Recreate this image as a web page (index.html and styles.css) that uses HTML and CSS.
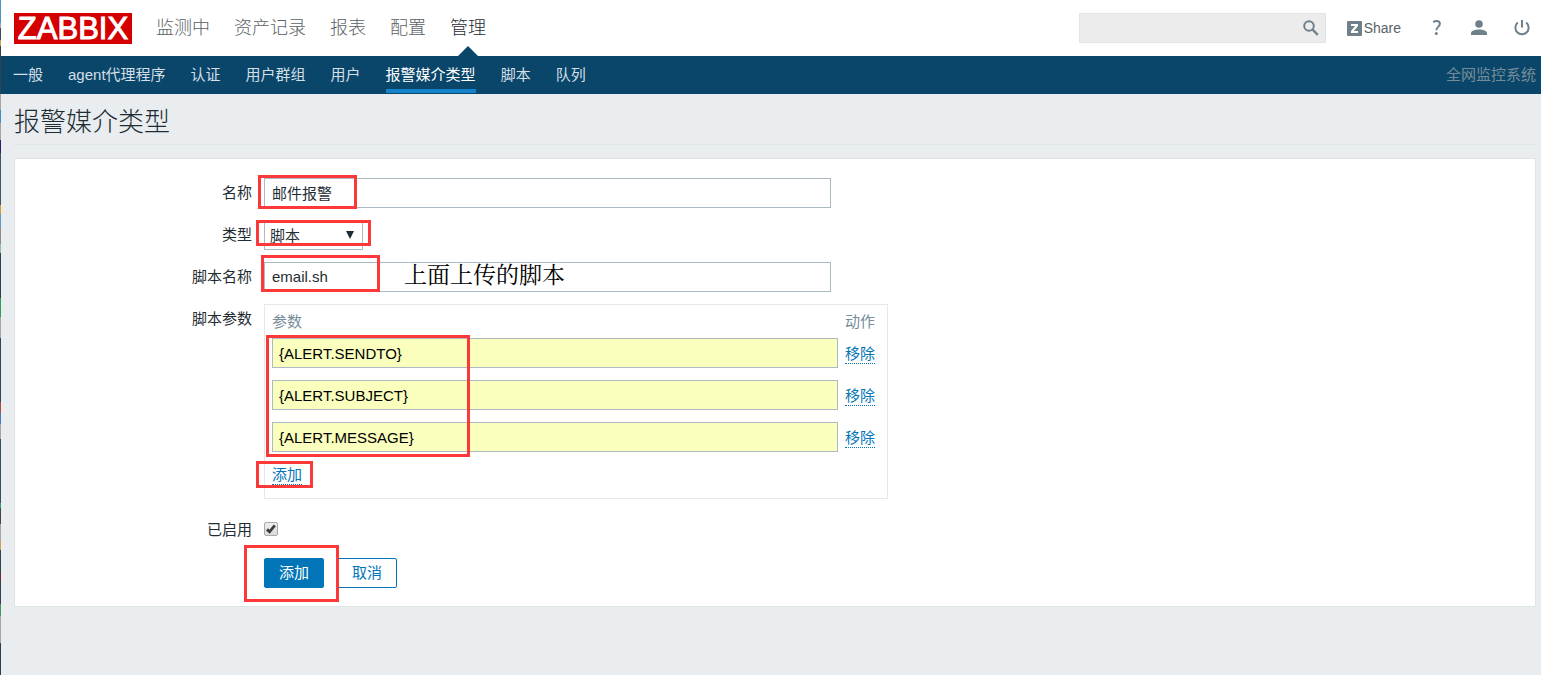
FILE: index.html
```html
<!DOCTYPE html>
<html lang="zh-CN">
<head>
<meta charset="utf-8">
<title>报警媒介类型</title>
<link rel="stylesheet" href="styles.css">
</head>
<body>
<header class="top-bar">
  <a class="logo" href="#">ZABBIX</a>
  <nav class="main-nav">
    <a href="#">监测中</a>
    <a href="#">资产记录</a>
    <a href="#">报表</a>
    <a href="#">配置</a>
    <a class="selected" href="#">管理</a>
  </nav>
  <div class="tools">
    <form class="search">
      <input type="text" aria-label="搜索">
      <button type="button" aria-label="搜索">
        <svg width="16" height="16" viewBox="0 0 16 16" fill="none" stroke="#6f808a"><circle cx="6" cy="6" r="4.8" stroke-width="2"/><path d="M9.5 9.5l5.3 5.3" stroke-width="2.4"/></svg>
      </button>
    </form>
    <a class="share" href="#"><span class="share-mark"><svg width="15" height="15" viewBox="0 0 15 15"><rect width="15" height="15" rx="1" fill="#6f808a"/><path d="M4 3h7v2L6.8 10H11v2H4v-2l4.2-5H4z" fill="#fff"/></svg></span>Share</a>
    <a class="tool help" href="#" aria-label="帮助"><svg width="10" height="16" viewBox="0 0 10 16"><path d="M1.2 2.2C2.2 1.4 3.400 1 4.600 1c2 0 3.300 1 3.300 2.800 0 3-3.600 3.200-3.600 6.400" fill="none" stroke="#6f808a" stroke-width="2"/><circle cx="4.300" cy="13.600" r="1.500" fill="#6f808a"/></svg></a>
    <a class="tool user" href="#" aria-label="用户"><svg width="16" height="16" viewBox="0 0 16 16" fill="#6f808a"><circle cx="8" cy="4" r="3.800"/><path d="M0 15v-2c0-2 4-3.500 8-3.500s8 1.500 8 3.500v2z"/></svg></a>
    <a class="tool power" href="#" aria-label="退出"><svg width="16" height="16" viewBox="0 0 16 16" fill="none" stroke="#6f808a" stroke-width="2"><path d="M8 0v7.500M3.800 2.600a6.600 6.600 0 1 0 8.400 0"/></svg></a>
  </div>
</header>
<div class="sub-bar">
  <nav class="sub-nav">
    <a href="#">一般</a>
    <a href="#">agent代理程序</a>
    <a href="#">认证</a>
    <a href="#">用户群组</a>
    <a href="#">用户</a>
    <a class="selected" href="#">报警媒介类型</a>
    <a href="#">脚本</a>
    <a href="#">队列</a>
  </nav>
  <span class="server-name">全网监控系统</span>
</div>
<main>
  <h1>报警媒介类型</h1>
  <form class="panel">
    <label for="name">名称</label>
    <div class="field"><input class="text" id="name" type="text" value="邮件报警"><span class="mark mark-name"></span></div>

    <label for="type">类型</label>
    <div class="field">
      <select id="type"><option>脚本</option></select>
      <svg class="caret" width="8" height="8" viewBox="0 0 8 8"><path d="M0 0h8L4 8z" fill="#1f2c33"/></svg>
      <span class="mark mark-type"></span>
    </div>

    <label for="script">脚本名称</label>
    <div class="field"><input class="text" id="script" type="text" value="email.sh"><span class="mark mark-script"></span><span class="note">上面上传的脚本</span></div>

    <span class="label">脚本参数</span>
    <div class="field params">
      <table>
        <thead><tr><th>参数</th><th>动作</th></tr></thead>
        <tbody>
          <tr><td><input class="text param" type="text" aria-label="参数 1" value="{ALERT.SENDTO}"></td><td><button class="link" type="button">移除</button></td></tr>
          <tr><td><input class="text param" type="text" aria-label="参数 2" value="{ALERT.SUBJECT}"></td><td><button class="link" type="button">移除</button></td></tr>
          <tr><td><input class="text param" type="text" aria-label="参数 3" value="{ALERT.MESSAGE}"></td><td><button class="link" type="button">移除</button></td></tr>
        </tbody>
      </table>
      <button class="link add" type="button">添加</button>
      <span class="mark mark-params"></span>
      <span class="mark mark-add"></span>
    </div>

    <label class="check-label" for="enabled">已启用</label>
    <div class="field check">
      <input id="enabled" type="checkbox" checked>
      <svg class="tick" width="14" height="14" viewBox="0 0 14 14" fill="none" stroke="#3c3c3c" stroke-width="2.800"><path d="M3 7.400l2.600 2.400L10.800 3.400"/></svg>
    </div>

    <div class="field actions">
      <button class="btn primary" type="button">添加</button>
      <button class="btn" type="button">取消</button>
      <span class="mark mark-submit"></span>
    </div>
  </form>
</main>
</body>
</html>
```
FILE: styles.css
```css
* { box-sizing: border-box; }

html {
  min-height: 100%;
  background:
    linear-gradient(#4a94c8 0 23px, #a5a5a5 23px 28px, #33505f 28px 40px, #c9a052 40px 46px, #33424d 46px 94px, #a5a5a5 94px 110px, #3c8fc0 110px 123px, #a5a5a5 123px 140px, #2a2060 140px 153px, #3f5561 153px 205px, #d99a2b 205px 214px, #5a9cc6 214px 227px, #8a8a8a 227px 244px, #8fbf9f 244px 253px, #2f3f50 253px 298px, #2f9e55 298px 317px, #a5a5a5 317px 338px, #2f4656 338px 402px, #b0483f 402px 413px, #4a78b8 413px 424px, #a5a5a5 424px 439px, #33505f 439px 503px, #2aa07a 503px 508px, #444 508px 524px, #a5a5a5 524px 541px, #c9a052 541px 550px, #33424d 550px 574px, #6d2b2b 574px 582px, #33424d 582px 604px, #3f9a58 604px 616px, #a5a5a5 616px 643px, #2c3c4c 643px)
    0 0 / 1px 100% no-repeat,
    #e9edf0;
}

body {
  margin: 0;
  padding-left: 1px;
  font: 15px/20px "Liberation Sans", "Noto Sans CJK SC", sans-serif;
  color: #1f2c33;
}

a { text-decoration: none; color: inherit; }
input, select, button { font: inherit; color: inherit; margin: 0; }
svg { display: block; }

.top-bar {
  display: flex;
  align-items: center;
  height: 56px;
  padding: 0 11px 0 13px;
  background: #fff;
}

.logo {
  width: 118px;
  height: 31px;
  background: #d40000;
  color: #fff;
  font-size: 31px;
  line-height: 32px;
  text-align: center;
  -webkit-text-stroke: 1px #fff;
}

.main-nav {
  display: flex;
  gap: 24px;
  margin-left: 24px;
  font-size: 18px;
  font-weight: 300;
  line-height: 56px;
  color: #5a6266;
}

.main-nav .selected { position: relative; color: #1f2c33; }

.main-nav .selected::after {
  content: "";
  position: absolute;
  left: 50%;
  bottom: 0;
  margin-left: -10px;
  border: solid transparent;
  border-width: 0 10px 10px;
  border-bottom-color: #0a466a;
}

.tools {
  display: flex;
  align-items: center;
  margin-left: auto;
}

.search {
  display: flex;
  align-items: center;
  width: 247px;
  height: 30px;
  margin-right: 21px;
  padding-right: 6px;
  background: #ececec;
  border: 1px solid #e2e5e7;
}

.search input {
  flex: 1;
  min-width: 0;
  border: 0;
  background: none;
}

.search button { padding: 0; border: 0; background: none; }

.share {
  display: flex;
  align-items: center;
  gap: 2px;
  margin-right: 31px;
  font-size: 14px;
  color: #5a6266;
}

.help { margin-right: 29px; }
.user { margin-right: 27px; }

.sub-bar {
  display: flex;
  justify-content: space-between;
  height: 38px;
  padding: 0 5px 0 12px;
  background: #0a466a;
  line-height: 37px;
  color: #d4dfe6;
}

.sub-nav { display: flex; gap: 25px; }

.sub-nav a { height: 37px; }

.sub-nav .selected {
  color: #fff;
  border-bottom: 4px solid #1583cb;
}

.server-name { color: #768d99; }

main { padding: 0 5px 0 13px; }

h1 {
  margin: 0 0 13px;
  padding: 8px 0 2px;
  border-bottom: 1px solid #dfe4e7;
  font-size: 26px;
  font-weight: 300;
  line-height: 40px;
}

.panel {
  display: grid;
  grid-template-columns: 237px 1fr;
  gap: 12px;
  padding: 19px 0 18px;
  border: 1px solid #dfe4e7;
  background: #fff;
}

.panel label, .label {
  line-height: 30px;
  text-align: right;
}

.field { position: relative; justify-self: start; }

.text {
  display: block;
  width: 567px;
  height: 30px;
  padding: 0 7px 2px;
  border: 1px solid #acbbc2;
  background: #fff;
}

.param {
  width: 566px;
  padding: 0 6px;
  background: #faffbd;
  color: #000;
}

select {
  display: block;
  width: 99px;
  height: 30px;
  padding: 2px 5px 0;
  border: 1px solid #acbbc2;
  border-radius: 0;
  background: #fff;
  appearance: none;
}

.caret {
  position: absolute;
  right: 9px;
  top: 11px;
  pointer-events: none;
}

.note {
  position: absolute;
  left: 140px;
  top: 0;
  font: 23px/28px "Liberation Serif", "Noto Serif CJK SC", "Noto Sans CJK SC", serif;
  color: #000;
  white-space: nowrap;
}

.params {
  padding: 0 12px 12px 7px;
  border: 1px solid #e5e9ec;
}

table { border-collapse: collapse; }

th {
  height: 33px;
  padding: 0;
  font-weight: 400;
  text-align: left;
  color: #768d99;
}

td { padding: 0 0 12px; vertical-align: top; }
td:first-child { padding-right: 7px; }

.link {
  display: block;
  margin-top: 6px;
  padding: 0;
  border: 0;
  border-bottom: 1px dotted #0275b8;
  background: none;
  line-height: 19px;
  color: #0275b8;
}

.add { margin: 1px 0; }

.panel .check-label { padding-top: 4px; }

.check { padding-top: 11px; }

.check input {
  display: block;
  width: 14px;
  height: 14px;
  border: 1px solid #a9a9a9;
  border-radius: 2px;
  background: linear-gradient(#eee, #dcdcdc);
  appearance: none;
}

.tick {
  position: absolute;
  left: 0;
  top: 11px;
  visibility: hidden;
  pointer-events: none;
}

input:checked + .tick { visibility: visible; }

.actions {
  grid-column: 2;
  display: flex;
  gap: 13px;
  margin-top: 1px;
}

.btn {
  width: 60px;
  height: 30px;
  padding: 0;
  border: 1px solid #0275b8;
  border-radius: 2px;
  background: #fff;
  color: #0275b8;
}

.primary { background: #0275b8; color: #fff; }

.mark {
  position: absolute;
  border: 3px solid #fc3838;
  pointer-events: none;
}

.mark-name { left: -6px; top: -3px; width: 99px; height: 34px; }
.mark-type { left: -8px; top: 0; width: 115px; height: 26px; }
.mark-script { left: -3px; top: -7px; width: 119px; height: 37px; }
.mark-params { left: 1px; top: 30px; width: 204px; height: 122px; }
.mark-add { left: -9px; top: 156px; width: 57px; height: 27px; }
.mark-submit { left: -20px; top: -13px; width: 95px; height: 57px; }
```
